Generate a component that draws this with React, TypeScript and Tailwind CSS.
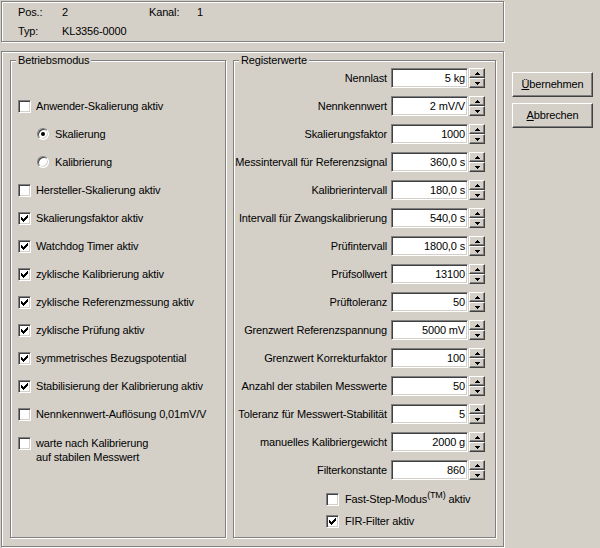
import React from "react";

const etched = "border border-[#808080] shadow-[inset_1px_1px_0_#fff,1px_1px_0_#fff]";
const sunken =
  "bg-white border border-t-[#808080] border-l-[#808080] border-r-white border-b-white shadow-[inset_1px_1px_0_#404040,inset_-1px_-1px_0_#d4d0c8]";
const raised =
  "border border-t-white border-l-white border-r-[#404040] border-b-[#404040] shadow-[inset_-1px_-1px_0_#808080]";

function Check({ checked }: { checked?: boolean }) {
  return (
    <span className={`w-[13px] h-[13px] shrink-0 flex items-center justify-center ${sunken}`}>
      {checked && (
        <svg width="7" height="7" viewBox="0 0 7 7" shapeRendering="crispEdges">
          <path
            d="M6 0h1v1h-1z M5 1h2v1h-2z M0 2h1v1h-1z M4 2h3v1h-3z M0 3h2v1h-2z M3 3h3v1h-3z M0 4h5v1h-5z M1 5h3v1h-3z M2 6h1v1h-1z"
            fill="#000"
          />
        </svg>
      )}
    </span>
  );
}

function Radio({ checked }: { checked?: boolean }) {
  return (
    <span
      className={`w-[12px] h-[12px] shrink-0 rounded-full flex items-center justify-center ${sunken}`}
    >
      {checked && <span className="w-[4px] h-[4px] rounded-full bg-black" />}
    </span>
  );
}

function Group({
  title,
  className,
  children,
}: {
  title: string;
  className: string;
  children: React.ReactNode;
}) {
  return (
    <div className={`relative ${etched} ${className}`}>
      <span className="absolute top-[-7px] left-[5px] px-[2px] h-[13px] leading-[13px] bg-[#d4d0c8]">
        {title}
      </span>
      {children}
    </div>
  );
}

function Arrow({ down }: { down?: boolean }) {
  return (
    <svg width="5" height="3" viewBox="0 0 5 3" shapeRendering="crispEdges">
      <path d={down ? "M0 0h5v1h-5z M1 1h3v1h-3z M2 2h1v1h-1z" : "M2 0h1v1h-1z M1 1h3v1h-3z M0 2h5v1h-5z"} fill="#000" />
    </svg>
  );
}

function Field({ label, value }: { label: string; value: string }) {
  return (
    <div className="flex items-center justify-end h-[28px] pr-[10px]">
      <span className="mr-[4px] whitespace-nowrap">{label}</span>
      <div className={`w-[77px] h-[20px] flex items-center justify-end pr-[2px] ${sunken}`}>{value}</div>
      <div className="flex flex-col w-[16px] h-[20px] ml-[1px] bg-[#d4d0c8]">
        <div className={`h-[10px] flex items-center justify-center ${raised}`}>
          <Arrow />
        </div>
        <div className={`h-[10px] flex items-center justify-center ${raised}`}>
          <Arrow down />
        </div>
      </div>
    </div>
  );
}

const modes: { label: string; checked?: boolean; radio?: boolean }[] = [
  { label: "Anwender-Skalierung aktiv" },
  { label: "Skalierung", radio: true, checked: true },
  { label: "Kalibrierung", radio: true },
  { label: "Hersteller-Skalierung aktiv" },
  { label: "Skalierungsfaktor aktiv", checked: true },
  { label: "Watchdog Timer aktiv", checked: true },
  { label: "zyklische Kalibrierung aktiv", checked: true },
  { label: "zyklische Referenzmessung aktiv", checked: true },
  { label: "zyklische Prüfung aktiv", checked: true },
  { label: "symmetrisches Bezugspotential", checked: true },
  { label: "Stabilisierung der Kalibrierung aktiv", checked: true },
  { label: "Nennkennwert-Auflösung 0,01mV/V" },
];

const registers = [
  ["Nennlast", "5 kg"],
  ["Nennkennwert", "2 mV/V"],
  ["Skalierungsfaktor", "1000"],
  ["Messintervall für Referenzsignal", "360,0 s"],
  ["Kalibrierintervall", "180,0 s"],
  ["Intervall für Zwangskalibrierung", "540,0 s"],
  ["Prüfintervall", "1800,0 s"],
  ["Prüfsollwert", "13100"],
  ["Prüftoleranz", "50"],
  ["Grenzwert Referenzspannung", "5000 mV"],
  ["Grenzwert Korrekturfaktor", "100"],
  ["Anzahl der stabilen Messwerte", "50"],
  ["Toleranz für Messwert-Stabilität", "5"],
  ["manuelles Kalibriergewicht", "2000 g"],
  ["Filterkonstante", "860"],
];

export default function App() {
  return (
    <div className="w-[600px] h-[548px] bg-[#d4d0c8] flex pl-[1px] pt-[1px] text-black text-[11px] tracking-[-0.15px] font-['Liberation_Sans',Arial,sans-serif] overflow-hidden">
      <div className="flex flex-col w-[503px] shrink-0">
        <div className={`h-[41px] w-[503px] pl-[16px] pt-[1px] ${etched}`}>
          <div className="flex items-center h-[19px]">
            <span className="w-[44px]">Pos.:</span>
            <span className="w-[87px]">2</span>
            <span className="w-[48px]">Kanal:</span>
            <span>1</span>
          </div>
          <div className="flex items-center h-[19px]">
            <span className="w-[44px]">Typ:</span>
            <span>KL3356-0000</span>
          </div>
        </div>

        <div className={`mt-[9px] h-[496px] w-[503px] flex gap-[7px] pt-[8px] pb-[8px] pl-[8px] pr-[7px] ${etched}`}>
          <Group title="Betriebsmodus" className="w-[216px] pt-[31px]">
            {modes.map((m) => (
              <div
                key={m.label}
                className={`flex items-center h-[28px] ${m.radio ? "pl-[26px] gap-[6px]" : "pl-[7px] gap-[5px]"}`}
              >
                {m.radio ? <Radio checked={m.checked} /> : <Check checked={m.checked} />}
                <span className="whitespace-nowrap">{m.label}</span>
              </div>
            ))}
            <div className="flex items-start pl-[7px] gap-[5px] pt-[8px]">
              <span className="mt-[1px]">
                <Check />
              </span>
              <span className="leading-[14px]">
                warte nach Kalibrierung
                <br />
                auf stabilen Messwert
              </span>
            </div>
          </Group>

          <Group title="Registerwerte" className="w-[263px] pt-[3px]">
            {registers.map(([l, v]) => (
              <Field key={l} label={l} value={v} />
            ))}
            <div className="mt-[4px] pl-[92px]">
              <div className="flex items-center h-[22px] gap-[6px]">
                <Check />
                <span className="whitespace-nowrap">
                  Fast-Step-Modus<sup className="text-[9px]">(TM)</sup> aktiv
                </span>
              </div>
              <div className="flex items-center h-[22px] gap-[6px]">
                <Check checked />
                <span>FIR-Filter aktiv</span>
              </div>
            </div>
          </Group>
        </div>
      </div>

      <div className="ml-[8px] mt-[71px] flex flex-col gap-[6px]">
        <button className={`w-[81px] h-[25px] bg-[#d4d0c8] flex items-center justify-center ${raised}`}>
          <span>
            <span className="underline">Ü</span>bernehmen
          </span>
        </button>
        <button className={`w-[81px] h-[25px] bg-[#d4d0c8] flex items-center justify-center ${raised}`}>
          <span>
            <span className="underline">A</span>bbrechen
          </span>
        </button>
      </div>
    </div>
  );
}
